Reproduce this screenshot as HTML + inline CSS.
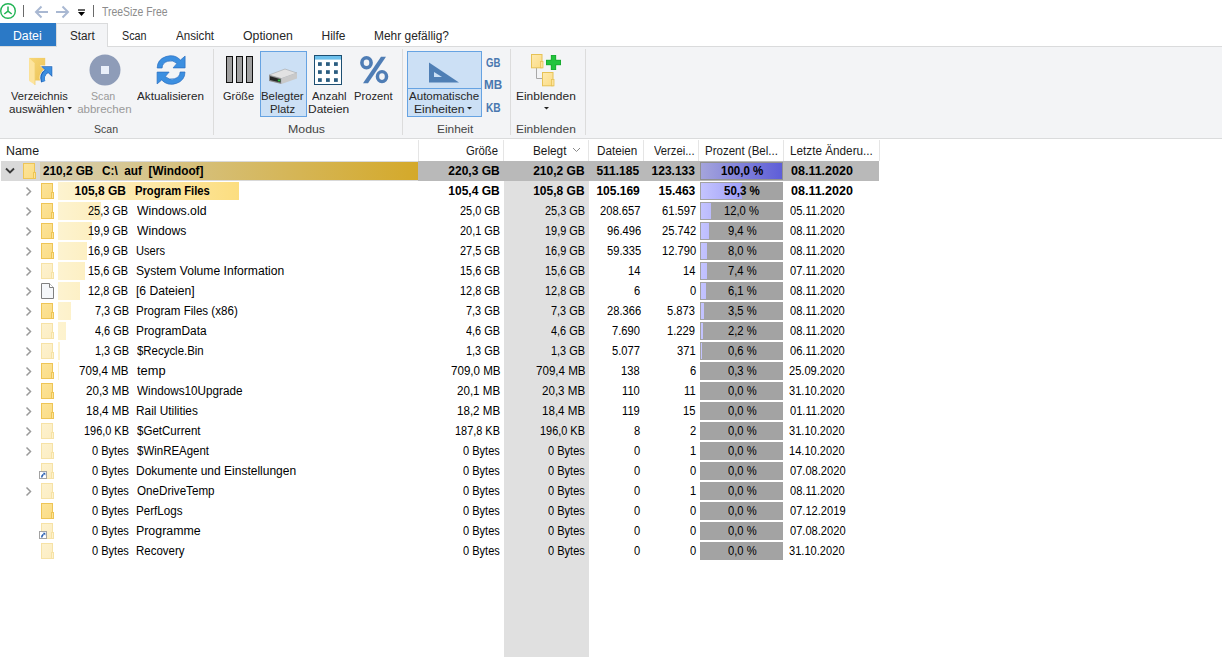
<!DOCTYPE html>
<html><head><meta charset="utf-8">
<style>
html,body{margin:0;padding:0;width:1222px;height:657px;overflow:hidden;background:#fff;font-family:"Liberation Sans",sans-serif;}
.t{position:absolute;white-space:pre;line-height:16px;transform-origin:0 0;}
.a{position:absolute;}
</style></head><body>
<!-- title bar -->
<svg class="a" style="left:0;top:0" width="100" height="23">
  <circle cx="8" cy="11" r="7.3" fill="none" stroke="#22b455" stroke-width="1.4"/>
  <path d="M8 6.5 V11.2 M8 11.2 L4.3 14 M8 11.2 L11.7 14" stroke="#22b455" stroke-width="1.5" fill="none"/>
  <path d="M23.5 5 V17" stroke="#6a6a6a" stroke-width="1"/>
  <path d="M36 12 H48 M41.5 6.5 L36 12 L41.5 17.5" stroke="#a9b8d2" stroke-width="2" fill="none"/>
  <path d="M56 12 H68 M62.5 6.5 L68 12 L62.5 17.5" stroke="#a9b8d2" stroke-width="2" fill="none"/>
  <path d="M78 10 H85" stroke="#000" stroke-width="1.2"/>
  <path d="M78 12 H85 L81.5 16 Z" fill="#000"/>
  <path d="M93.5 5 V17" stroke="#6a6a6a" stroke-width="1"/>
</svg>
<!-- tabs -->
<div class="a" style="left:0;top:23px;width:56px;height:23px;background:#2b79c6"></div>
<div class="a" style="left:56px;top:23px;width:50px;height:24px;background:#f3f4f6;border:1px solid #dadbdc;border-bottom:none;box-sizing:content-box"></div>
<!-- ribbon -->
<div class="a" style="left:0;top:46px;width:1222px;height:92px;background:#f3f4f6;border-top:1px solid #dadbdc;border-bottom:1px solid #dadbdc;box-sizing:border-box;height:93px"></div>
<div class="a" style="left:57px;top:46px;width:50px;height:2px;background:#f3f4f6"></div>
<!-- group separators -->
<div class="a" style="left:213px;top:49px;width:1px;height:86px;background:#dcdcdc"></div>
<div class="a" style="left:402px;top:49px;width:1px;height:86px;background:#dcdcdc"></div>
<div class="a" style="left:510px;top:49px;width:1px;height:86px;background:#dcdcdc"></div>
<div class="a" style="left:585px;top:49px;width:1px;height:86px;background:#dcdcdc"></div>
<!-- selected buttons -->
<div class="a" style="left:260px;top:51px;width:47px;height:66px;background:#cce0f5;border:1px solid #66a3e2;box-sizing:border-box"></div>
<div class="a" style="left:407px;top:51px;width:75px;height:66px;background:#cce0f5;border:1px solid #66a3e2;box-sizing:border-box"></div>
<div class="a" style="left:408px;top:88px;width:73px;height:1px;background:#66a3e2"></div>
<!-- ribbon icons -->
<svg class="a" style="left:0;top:0" width="600" height="138">
  <!-- Verzeichnis: folder + arrow -->
    <defs><linearGradient id="vb" x1="0" y1="0" x2="1" y2="1"><stop offset="0" stop-color="#f7d676"/><stop offset="1" stop-color="#ecc357"/></linearGradient></defs>
    <rect x="29.2" y="57.9" width="16" height="22.6" fill="url(#vb)"/>
    <path d="M29.2 57.9 L35 63.5 L35 85 L29.2 81 Z" fill="#fde49e"/>
    <path d="M35 63.5 L35 85" stroke="#f0cf72" stroke-width="0.8"/>
    <path d="M47 71 C43 73.5 41.5 77 43.2 81.8" stroke="#fff" stroke-width="5.8" fill="none"/>
    <path d="M40 65.5 H53.2 V78 Z" fill="#fff"/>
    <path d="M47 71 C43 73.5 41.5 77 43.2 81.8" stroke="#2566b8" stroke-width="4.6" fill="none"/>
    <path d="M41 66.3 H52.3 V77 Z" fill="#2566b8"/>
    <path d="M47 71 C43.4 73.6 42.2 77 43.6 81.2" stroke="#3d8fe0" stroke-width="3.2" fill="none"/>
    <path d="M42.6 67 H51.6 V75.4 Z" fill="#3d8fe0"/>
    <!-- stop -->
    <circle cx="105" cy="70" r="15.5" fill="#8e9cb8"/>
    <rect x="101" y="66" width="8" height="8" fill="#e9eff9"/>
    <!-- refresh -->
    <g fill="#3c8fe0" stroke="#2a6fc2" stroke-width="0.7">
    <path d="M157.2 68 A13.3 12.2 0 0 1 180.5 60 L185.1 56.1 L185.1 67.9 L173.1 67.9 L176.9 63.4 A8.4 7.2 0 0 0 162.1 68 Z"/>
    <path d="M185 72 A13.3 12.2 0 0 1 161.7 80 L157.1 83.9 L157.1 72.1 L169.1 72.1 L165.3 76.6 A8.4 7.2 0 0 0 180.1 72 Z"/>
    </g>
    <!-- groesse bars -->
    <rect x="226.5" y="56.5" width="6" height="26" fill="#a0a0a0" stroke="#111"/>
    <rect x="236.5" y="56.5" width="6" height="26" fill="#a0a0a0" stroke="#111"/>
    <rect x="246.5" y="56.5" width="6" height="26" fill="#a0a0a0" stroke="#111"/>
    <!-- drive -->
    <path d="M269 75 L285 69 L297 73 L281.5 78.5 Z" fill="#e2e2e2" stroke="#9a9a9a" stroke-width="0.5"/>
    <path d="M269 75 L281.5 78.5 L281.5 84 L269 81 Z" fill="#8a8a8a"/>
    <path d="M270 76.3 L280.5 79.3 L280.5 82.6 L270 80 Z" fill="#262626"/>
    <path d="M281.5 78.5 L297 73 L297 78.5 L281.5 84 Z" fill="#c9c9c9"/>
    <rect x="277.8" y="79.6" width="2.4" height="1.8" fill="#2cc040"/>
    <!-- calendar -->
    <rect x="314.5" y="55.5" width="27" height="29" fill="#fff" stroke="#1d4f72"/>
    <rect x="315" y="56" width="26" height="3.6" fill="#6cc0ec"/>
    <g fill="#2b5d80">
      <rect x="318" y="62.2" width="3.8" height="3.7"/><rect x="326" y="62.2" width="3.8" height="3.7"/><rect x="334" y="62.2" width="3.8" height="3.7"/>
      <rect x="318" y="70.2" width="3.8" height="3.7"/><rect x="326" y="70.2" width="3.8" height="3.7"/><rect x="334" y="70.2" width="3.8" height="3.7"/>
      <rect x="318" y="78.2" width="3.8" height="3.7"/><rect x="326" y="78.2" width="3.8" height="3.7"/><rect x="334" y="78.2" width="3.8" height="3.7"/>
    </g>
    <!-- percent -->
    <g fill="#4f7db5" fill-rule="evenodd">
      <path d="M360.1 62.8 A6.4 6.7 0 1 0 372.9 62.8 A6.4 6.7 0 1 0 360.1 62.8 Z M363.7 62.8 A2.8 3.3 0 1 0 369.3 62.8 A2.8 3.3 0 1 0 363.7 62.8 Z"/>
      <path d="M375.7 76.6 A6.3 6.6 0 1 0 388.3 76.6 A6.3 6.6 0 1 0 375.7 76.6 Z M379.2 76.6 A2.8 3.3 0 1 0 384.8 76.6 A2.8 3.3 0 1 0 379.2 76.6 Z"/>
      <path d="M363 83.2 L368 83.2 L386 56.8 L381 56.8 Z"/>
    </g>
    <!-- set square -->
    <path d="M429 62.5 L459 82.5 L429 82.5 Z" fill="#4f7fb5"/>
    <path d="M434 72 L442 77 L434 77 Z" fill="#cce0f5"/>
    <!-- einblenden -->
    <defs><linearGradient id="eb" x1="0" y1="0" x2="1" y2="1"><stop offset="0" stop-color="#feeab0"/><stop offset="1" stop-color="#fbdc84"/></linearGradient></defs>
    <path d="M536.5 68 V78.5 H542" stroke="#a8a8a8" fill="none"/>
    <rect x="531.5" y="54.5" width="10.5" height="13.3" fill="url(#eb)" stroke="#e6c256"/>
    <rect x="540.5" y="61.5" width="2.5" height="6.3" fill="#fde39a" stroke="#e6c256" stroke-width="0.8"/>
    <rect x="542.5" y="72.5" width="10.5" height="13.3" fill="url(#eb)" stroke="#e6c256"/>
    <rect x="551.5" y="79.5" width="2.5" height="6.3" fill="#fde39a" stroke="#e6c256" stroke-width="0.8"/>
    <path d="M546 62.5 H561 M553.5 55 V70" stroke="#fff" stroke-width="7"/>
    <path d="M546 62.5 H561 M553.5 55 V70" stroke="#15a02c" stroke-width="5.4"/>
    <path d="M546.6 62.5 H560.4 M553.5 55.6 V69.4" stroke="#22c43c" stroke-width="4"/>
    <!-- dropdown arrows -->
    <path d="M67.5 107 H72 L69.75 109.5 Z" fill="#222"/>
    <path d="M467 107 H472 L469.5 109.5 Z" fill="#222"/>
    <path d="M544 107 H549 L546.5 109.5 Z" fill="#222"/>
  
</svg>
<!-- list header -->
<div class="a" style="left:418px;top:140px;width:1px;height:21px;background:#e5e5e5"></div>
<div class="a" style="left:503px;top:140px;width:1px;height:21px;background:#e5e5e5"></div>
<div class="a" style="left:588px;top:140px;width:1px;height:21px;background:#e5e5e5"></div>
<div class="a" style="left:643px;top:140px;width:1px;height:21px;background:#e5e5e5"></div>
<div class="a" style="left:698px;top:140px;width:1px;height:21px;background:#e5e5e5"></div>
<div class="a" style="left:783px;top:140px;width:1px;height:21px;background:#e5e5e5"></div>
<div class="a" style="left:879px;top:140px;width:1px;height:21px;background:#e5e5e5"></div>
<svg class="a" style="left:570px;top:146px" width="12" height="8"><path d="M3 2 L6.5 5.5 L10 2" stroke="#8a8a8a" stroke-width="1" fill="none"/></svg>
<!-- sorted column bg -->
<div class="a" style="left:504px;top:181px;width:85px;height:476px;background:#e0e0e0"></div>
<div style="position:absolute;left:1px;top:161px;width:417px;height:20px;background:#d9d9d9"></div>
<div style="position:absolute;left:418px;top:161px;width:461px;height:20px;background:#b9b9b9"></div>
<div style="position:absolute;left:40px;top:162px;width:378px;height:18px;background:linear-gradient(90deg,#d7cfb1,#d4a92a)"></div>
<div style="position:absolute;left:700px;top:162px;width:83px;height:18px;background:#909090"></div>
<div style="position:absolute;left:701px;top:163px;width:81px;height:16px;background:linear-gradient(90deg,#a4a4dc,#5e5ed8)"></div>
<svg style="position:absolute;left:4px;top:166px" width="12" height="10"><path d="M2 2.5 L6 6.5 L10 2.5" fill="none" stroke="#383838" stroke-width="1.8"/></svg>
<svg style="position:absolute;left:23px;top:163px" width="14" height="17"><defs><linearGradient id="fg0" x1="0" y1="0" x2="1" y2="1"><stop offset="0" stop-color="#fce49a"/><stop offset="1" stop-color="#fbdc84"/></linearGradient></defs><rect x="0.5" y="0.5" width="11" height="15" fill="url(#fg0)" stroke="#eec556"/><rect x="10.5" y="9.5" width="2" height="6" fill="#fce49a" stroke="#eec556"/></svg>
<div style="position:absolute;left:58px;top:182px;width:181px;height:18px;background:linear-gradient(90deg,#fdf3d0,#fbc830);background-size:360px 18px"></div>
<div style="position:absolute;left:700px;top:182px;width:83px;height:18px;background:#a3a3a3"></div>
<div style="position:absolute;left:701px;top:183px;width:41px;height:16px;background:linear-gradient(90deg,#c4c4ff,#7c7cf0);background-size:81px 16px"></div>
<svg style="position:absolute;left:24px;top:186px" width="10" height="12"><path d="M2.5 1.5 L6.5 5.5 L2.5 9.5" fill="none" stroke="#9a9a9a" stroke-width="1.5"/></svg>
<svg style="position:absolute;left:41px;top:183px" width="14" height="17"><defs><linearGradient id="fg1" x1="0" y1="0" x2="1" y2="1"><stop offset="0" stop-color="#fce49a"/><stop offset="1" stop-color="#fbdc84"/></linearGradient></defs><rect x="0.5" y="0.5" width="11" height="15" fill="url(#fg1)" stroke="#eec556"/><rect x="10.5" y="9.5" width="2" height="6" fill="#fce49a" stroke="#eec556"/></svg>
<div style="position:absolute;left:58px;top:202px;width:43px;height:18px;background:linear-gradient(90deg,#fdf3d0,#fbc830);background-size:360px 18px"></div>
<div style="position:absolute;left:700px;top:202px;width:83px;height:18px;background:#a3a3a3"></div>
<div style="position:absolute;left:701px;top:203px;width:10px;height:16px;background:linear-gradient(90deg,#c4c4ff,#7c7cf0);background-size:81px 16px"></div>
<svg style="position:absolute;left:24px;top:206px" width="10" height="12"><path d="M2.5 1.5 L6.5 5.5 L2.5 9.5" fill="none" stroke="#9a9a9a" stroke-width="1.5"/></svg>
<svg style="position:absolute;left:41px;top:203px" width="14" height="17"><defs><linearGradient id="fg2" x1="0" y1="0" x2="1" y2="1"><stop offset="0" stop-color="#fce49a"/><stop offset="1" stop-color="#fbdc84"/></linearGradient></defs><rect x="0.5" y="0.5" width="11" height="15" fill="url(#fg2)" stroke="#eec556"/><rect x="10.5" y="9.5" width="2" height="6" fill="#fce49a" stroke="#eec556"/></svg>
<div style="position:absolute;left:58px;top:222px;width:34px;height:18px;background:linear-gradient(90deg,#fdf3d0,#fbc830);background-size:360px 18px"></div>
<div style="position:absolute;left:700px;top:222px;width:83px;height:18px;background:#a3a3a3"></div>
<div style="position:absolute;left:701px;top:223px;width:8px;height:16px;background:linear-gradient(90deg,#c4c4ff,#7c7cf0);background-size:81px 16px"></div>
<svg style="position:absolute;left:24px;top:226px" width="10" height="12"><path d="M2.5 1.5 L6.5 5.5 L2.5 9.5" fill="none" stroke="#9a9a9a" stroke-width="1.5"/></svg>
<svg style="position:absolute;left:41px;top:223px" width="14" height="17"><defs><linearGradient id="fg3" x1="0" y1="0" x2="1" y2="1"><stop offset="0" stop-color="#fce49a"/><stop offset="1" stop-color="#fbdc84"/></linearGradient></defs><rect x="0.5" y="0.5" width="11" height="15" fill="url(#fg3)" stroke="#eec556"/><rect x="10.5" y="9.5" width="2" height="6" fill="#fce49a" stroke="#eec556"/></svg>
<div style="position:absolute;left:58px;top:242px;width:29px;height:18px;background:linear-gradient(90deg,#fdf3d0,#fbc830);background-size:360px 18px"></div>
<div style="position:absolute;left:700px;top:242px;width:83px;height:18px;background:#a3a3a3"></div>
<div style="position:absolute;left:701px;top:243px;width:6px;height:16px;background:linear-gradient(90deg,#c4c4ff,#7c7cf0);background-size:81px 16px"></div>
<svg style="position:absolute;left:24px;top:246px" width="10" height="12"><path d="M2.5 1.5 L6.5 5.5 L2.5 9.5" fill="none" stroke="#9a9a9a" stroke-width="1.5"/></svg>
<svg style="position:absolute;left:41px;top:243px" width="14" height="17"><defs><linearGradient id="fg4" x1="0" y1="0" x2="1" y2="1"><stop offset="0" stop-color="#fce49a"/><stop offset="1" stop-color="#fbdc84"/></linearGradient></defs><rect x="0.5" y="0.5" width="11" height="15" fill="url(#fg4)" stroke="#eec556"/><rect x="10.5" y="9.5" width="2" height="6" fill="#fce49a" stroke="#eec556"/></svg>
<div style="position:absolute;left:58px;top:262px;width:27px;height:18px;background:linear-gradient(90deg,#fdf3d0,#fbc830);background-size:360px 18px"></div>
<div style="position:absolute;left:700px;top:262px;width:83px;height:18px;background:#a3a3a3"></div>
<div style="position:absolute;left:701px;top:263px;width:6px;height:16px;background:linear-gradient(90deg,#c4c4ff,#7c7cf0);background-size:81px 16px"></div>
<svg style="position:absolute;left:24px;top:266px" width="10" height="12"><path d="M2.5 1.5 L6.5 5.5 L2.5 9.5" fill="none" stroke="#9a9a9a" stroke-width="1.5"/></svg>
<svg style="position:absolute;left:41px;top:263px" width="14" height="17"><defs><linearGradient id="fg5" x1="0" y1="0" x2="1" y2="1"><stop offset="0" stop-color="#fdf2cf"/><stop offset="1" stop-color="#fcedc2"/></linearGradient></defs><rect x="0.5" y="0.5" width="11" height="15" fill="url(#fg5)" stroke="#f6e2a6"/><rect x="10.5" y="9.5" width="2" height="6" fill="#fdf2cf" stroke="#f6e2a6"/></svg>
<div style="position:absolute;left:58px;top:282px;width:22px;height:18px;background:linear-gradient(90deg,#fdf3d0,#fbc830);background-size:360px 18px"></div>
<div style="position:absolute;left:700px;top:282px;width:83px;height:18px;background:#a3a3a3"></div>
<div style="position:absolute;left:701px;top:283px;width:5px;height:16px;background:linear-gradient(90deg,#c4c4ff,#7c7cf0);background-size:81px 16px"></div>
<svg style="position:absolute;left:24px;top:286px" width="10" height="12"><path d="M2.5 1.5 L6.5 5.5 L2.5 9.5" fill="none" stroke="#9a9a9a" stroke-width="1.5"/></svg>
<svg style="position:absolute;left:41px;top:283px" width="13" height="16"><path d="M0.5 0.5 H8.5 L12.5 4.5 V15.5 H0.5 Z" fill="#f5f7fa" stroke="#808080"/><path d="M8.5 0.5 V4.5 H12.5" fill="#fff" stroke="#808080"/></svg>
<div style="position:absolute;left:58px;top:302px;width:13px;height:18px;background:linear-gradient(90deg,#fdf3d0,#fbc830);background-size:360px 18px"></div>
<div style="position:absolute;left:700px;top:302px;width:83px;height:18px;background:#a3a3a3"></div>
<div style="position:absolute;left:701px;top:303px;width:3px;height:16px;background:linear-gradient(90deg,#c4c4ff,#7c7cf0);background-size:81px 16px"></div>
<svg style="position:absolute;left:24px;top:306px" width="10" height="12"><path d="M2.5 1.5 L6.5 5.5 L2.5 9.5" fill="none" stroke="#9a9a9a" stroke-width="1.5"/></svg>
<svg style="position:absolute;left:41px;top:303px" width="14" height="17"><defs><linearGradient id="fg7" x1="0" y1="0" x2="1" y2="1"><stop offset="0" stop-color="#fce49a"/><stop offset="1" stop-color="#fbdc84"/></linearGradient></defs><rect x="0.5" y="0.5" width="11" height="15" fill="url(#fg7)" stroke="#eec556"/><rect x="10.5" y="9.5" width="2" height="6" fill="#fce49a" stroke="#eec556"/></svg>
<div style="position:absolute;left:58px;top:322px;width:8px;height:18px;background:linear-gradient(90deg,#fdf3d0,#fbc830);background-size:360px 18px"></div>
<div style="position:absolute;left:700px;top:322px;width:83px;height:18px;background:#a3a3a3"></div>
<div style="position:absolute;left:701px;top:323px;width:2px;height:16px;background:linear-gradient(90deg,#c4c4ff,#7c7cf0);background-size:81px 16px"></div>
<svg style="position:absolute;left:24px;top:326px" width="10" height="12"><path d="M2.5 1.5 L6.5 5.5 L2.5 9.5" fill="none" stroke="#9a9a9a" stroke-width="1.5"/></svg>
<svg style="position:absolute;left:41px;top:323px" width="14" height="17"><defs><linearGradient id="fg8" x1="0" y1="0" x2="1" y2="1"><stop offset="0" stop-color="#fdf2cf"/><stop offset="1" stop-color="#fcedc2"/></linearGradient></defs><rect x="0.5" y="0.5" width="11" height="15" fill="url(#fg8)" stroke="#f6e2a6"/><rect x="10.5" y="9.5" width="2" height="6" fill="#fdf2cf" stroke="#f6e2a6"/></svg>
<div style="position:absolute;left:58px;top:342px;width:2px;height:18px;background:linear-gradient(90deg,#fdf3d0,#fbc830);background-size:360px 18px"></div>
<div style="position:absolute;left:700px;top:342px;width:83px;height:18px;background:#a3a3a3"></div>
<div style="position:absolute;left:701px;top:343px;width:1px;height:16px;background:linear-gradient(90deg,#c4c4ff,#7c7cf0);background-size:81px 16px"></div>
<svg style="position:absolute;left:24px;top:346px" width="10" height="12"><path d="M2.5 1.5 L6.5 5.5 L2.5 9.5" fill="none" stroke="#9a9a9a" stroke-width="1.5"/></svg>
<svg style="position:absolute;left:41px;top:343px" width="14" height="17"><defs><linearGradient id="fg9" x1="0" y1="0" x2="1" y2="1"><stop offset="0" stop-color="#fdf2cf"/><stop offset="1" stop-color="#fcedc2"/></linearGradient></defs><rect x="0.5" y="0.5" width="11" height="15" fill="url(#fg9)" stroke="#f6e2a6"/><rect x="10.5" y="9.5" width="2" height="6" fill="#fdf2cf" stroke="#f6e2a6"/></svg>
<div style="position:absolute;left:58px;top:362px;width:1px;height:18px;background:linear-gradient(90deg,#fdf3d0,#fbc830);background-size:360px 18px"></div>
<div style="position:absolute;left:700px;top:362px;width:83px;height:18px;background:#a3a3a3"></div>
<svg style="position:absolute;left:24px;top:366px" width="10" height="12"><path d="M2.5 1.5 L6.5 5.5 L2.5 9.5" fill="none" stroke="#9a9a9a" stroke-width="1.5"/></svg>
<svg style="position:absolute;left:41px;top:363px" width="14" height="17"><defs><linearGradient id="fg10" x1="0" y1="0" x2="1" y2="1"><stop offset="0" stop-color="#fce49a"/><stop offset="1" stop-color="#fbdc84"/></linearGradient></defs><rect x="0.5" y="0.5" width="11" height="15" fill="url(#fg10)" stroke="#eec556"/><rect x="10.5" y="9.5" width="2" height="6" fill="#fce49a" stroke="#eec556"/></svg>
<div style="position:absolute;left:700px;top:382px;width:83px;height:18px;background:#a3a3a3"></div>
<svg style="position:absolute;left:24px;top:386px" width="10" height="12"><path d="M2.5 1.5 L6.5 5.5 L2.5 9.5" fill="none" stroke="#9a9a9a" stroke-width="1.5"/></svg>
<svg style="position:absolute;left:41px;top:383px" width="14" height="17"><defs><linearGradient id="fg11" x1="0" y1="0" x2="1" y2="1"><stop offset="0" stop-color="#fce49a"/><stop offset="1" stop-color="#fbdc84"/></linearGradient></defs><rect x="0.5" y="0.5" width="11" height="15" fill="url(#fg11)" stroke="#eec556"/><rect x="10.5" y="9.5" width="2" height="6" fill="#fce49a" stroke="#eec556"/></svg>
<div style="position:absolute;left:700px;top:402px;width:83px;height:18px;background:#a3a3a3"></div>
<svg style="position:absolute;left:24px;top:406px" width="10" height="12"><path d="M2.5 1.5 L6.5 5.5 L2.5 9.5" fill="none" stroke="#9a9a9a" stroke-width="1.5"/></svg>
<svg style="position:absolute;left:41px;top:403px" width="14" height="17"><defs><linearGradient id="fg12" x1="0" y1="0" x2="1" y2="1"><stop offset="0" stop-color="#fce49a"/><stop offset="1" stop-color="#fbdc84"/></linearGradient></defs><rect x="0.5" y="0.5" width="11" height="15" fill="url(#fg12)" stroke="#eec556"/><rect x="10.5" y="9.5" width="2" height="6" fill="#fce49a" stroke="#eec556"/></svg>
<div style="position:absolute;left:700px;top:422px;width:83px;height:18px;background:#a3a3a3"></div>
<svg style="position:absolute;left:24px;top:426px" width="10" height="12"><path d="M2.5 1.5 L6.5 5.5 L2.5 9.5" fill="none" stroke="#9a9a9a" stroke-width="1.5"/></svg>
<svg style="position:absolute;left:41px;top:423px" width="14" height="17"><defs><linearGradient id="fg13" x1="0" y1="0" x2="1" y2="1"><stop offset="0" stop-color="#fdf2cf"/><stop offset="1" stop-color="#fcedc2"/></linearGradient></defs><rect x="0.5" y="0.5" width="11" height="15" fill="url(#fg13)" stroke="#f6e2a6"/><rect x="10.5" y="9.5" width="2" height="6" fill="#fdf2cf" stroke="#f6e2a6"/></svg>
<div style="position:absolute;left:700px;top:442px;width:83px;height:18px;background:#a3a3a3"></div>
<svg style="position:absolute;left:24px;top:446px" width="10" height="12"><path d="M2.5 1.5 L6.5 5.5 L2.5 9.5" fill="none" stroke="#9a9a9a" stroke-width="1.5"/></svg>
<svg style="position:absolute;left:41px;top:443px" width="14" height="17"><defs><linearGradient id="fg14" x1="0" y1="0" x2="1" y2="1"><stop offset="0" stop-color="#fdf2cf"/><stop offset="1" stop-color="#fcedc2"/></linearGradient></defs><rect x="0.5" y="0.5" width="11" height="15" fill="url(#fg14)" stroke="#f6e2a6"/><rect x="10.5" y="9.5" width="2" height="6" fill="#fdf2cf" stroke="#f6e2a6"/></svg>
<div style="position:absolute;left:700px;top:462px;width:83px;height:18px;background:#a3a3a3"></div>
<svg style="position:absolute;left:41px;top:463px" width="14" height="17"><defs><linearGradient id="fg15" x1="0" y1="0" x2="1" y2="1"><stop offset="0" stop-color="#fdf2cf"/><stop offset="1" stop-color="#fcedc2"/></linearGradient></defs><rect x="0.5" y="0.5" width="11" height="15" fill="url(#fg15)" stroke="#f6e2a6"/><rect x="10.5" y="9.5" width="2" height="6" fill="#fdf2cf" stroke="#f6e2a6"/></svg>
<svg style="position:absolute;left:39px;top:471px" width="8" height="8"><rect x="0.5" y="0.5" width="7" height="7" fill="#fff" stroke="#a3a3a3"/><path d="M3 6.5 C2.6 5 3.2 4 4.6 3.3" stroke="#2a5fb0" stroke-width="1.5" fill="none"/><path d="M3.6 1.8 H6.3 V4.5 Z" fill="#2a5fb0"/></svg>
<div style="position:absolute;left:700px;top:482px;width:83px;height:18px;background:#a3a3a3"></div>
<svg style="position:absolute;left:24px;top:486px" width="10" height="12"><path d="M2.5 1.5 L6.5 5.5 L2.5 9.5" fill="none" stroke="#9a9a9a" stroke-width="1.5"/></svg>
<svg style="position:absolute;left:41px;top:483px" width="14" height="17"><defs><linearGradient id="fg16" x1="0" y1="0" x2="1" y2="1"><stop offset="0" stop-color="#fdf2cf"/><stop offset="1" stop-color="#fcedc2"/></linearGradient></defs><rect x="0.5" y="0.5" width="11" height="15" fill="url(#fg16)" stroke="#f6e2a6"/><rect x="10.5" y="9.5" width="2" height="6" fill="#fdf2cf" stroke="#f6e2a6"/></svg>
<div style="position:absolute;left:700px;top:502px;width:83px;height:18px;background:#a3a3a3"></div>
<svg style="position:absolute;left:41px;top:503px" width="14" height="17"><defs><linearGradient id="fg17" x1="0" y1="0" x2="1" y2="1"><stop offset="0" stop-color="#fce49a"/><stop offset="1" stop-color="#fbdc84"/></linearGradient></defs><rect x="0.5" y="0.5" width="11" height="15" fill="url(#fg17)" stroke="#eec556"/><rect x="10.5" y="9.5" width="2" height="6" fill="#fce49a" stroke="#eec556"/></svg>
<div style="position:absolute;left:700px;top:522px;width:83px;height:18px;background:#a3a3a3"></div>
<svg style="position:absolute;left:41px;top:523px" width="14" height="17"><defs><linearGradient id="fg18" x1="0" y1="0" x2="1" y2="1"><stop offset="0" stop-color="#fdf2cf"/><stop offset="1" stop-color="#fcedc2"/></linearGradient></defs><rect x="0.5" y="0.5" width="11" height="15" fill="url(#fg18)" stroke="#f6e2a6"/><rect x="10.5" y="9.5" width="2" height="6" fill="#fdf2cf" stroke="#f6e2a6"/></svg>
<svg style="position:absolute;left:39px;top:531px" width="8" height="8"><rect x="0.5" y="0.5" width="7" height="7" fill="#fff" stroke="#a3a3a3"/><path d="M3 6.5 C2.6 5 3.2 4 4.6 3.3" stroke="#2a5fb0" stroke-width="1.5" fill="none"/><path d="M3.6 1.8 H6.3 V4.5 Z" fill="#2a5fb0"/></svg>
<div style="position:absolute;left:700px;top:542px;width:83px;height:18px;background:#a3a3a3"></div>
<svg style="position:absolute;left:41px;top:543px" width="14" height="17"><defs><linearGradient id="fg19" x1="0" y1="0" x2="1" y2="1"><stop offset="0" stop-color="#fdf2cf"/><stop offset="1" stop-color="#fcedc2"/></linearGradient></defs><rect x="0.5" y="0.5" width="11" height="15" fill="url(#fg19)" stroke="#f6e2a6"/><rect x="10.5" y="9.5" width="2" height="6" fill="#fdf2cf" stroke="#f6e2a6"/></svg>
<div class="t" style="left:101.80px;top:4px;font-size:12px;color:#8c8c8c;transform:scaleX(0.868)">TreeSize Free</div>
<div class="t" style="left:13.48px;top:28px;font-size:12px;color:#fff;transform:scaleX(1.023)">Datei</div>
<div class="t" style="left:69.53px;top:28px;font-size:12px;color:#262626;transform:scaleX(0.975)">Start</div>
<div class="t" style="left:122.40px;top:28px;font-size:12px;color:#262626;transform:scaleX(0.896)">Scan</div>
<div class="t" style="left:176.00px;top:28px;font-size:12px;color:#262626;transform:scaleX(0.967)">Ansicht</div>
<div class="t" style="left:243.30px;top:28px;font-size:12px;color:#262626;transform:scaleX(1.023)">Optionen</div>
<div class="t" style="left:321.50px;top:28px;font-size:12px;color:#262626">Hilfe</div>
<div class="t" style="left:374.31px;top:28px;font-size:12px;color:#262626;transform:scaleX(0.995)">Mehr gefällig?</div>
<div class="t" style="left:11.30px;top:88px;font-size:11.5px;color:#262626;transform:scaleX(0.964)">Verzeichnis</div>
<div class="t" style="left:8.70px;top:101px;font-size:11.5px;color:#262626;transform:scaleX(1.011)">auswählen</div>
<div class="t" style="left:91.48px;top:88px;font-size:11.5px;color:#9a9a9a;transform:scaleX(0.924)">Scan</div>
<div class="t" style="left:77.20px;top:101px;font-size:11.5px;color:#9a9a9a">abbrechen</div>
<div class="t" style="left:137.20px;top:88px;font-size:11.5px;color:#262626;transform:scaleX(1.018)">Aktualisieren</div>
<div class="t" style="left:222.74px;top:88px;font-size:11.5px;color:#262626;transform:scaleX(0.958)">Größe</div>
<div class="t" style="left:261.31px;top:88px;font-size:11.5px;color:#262626;transform:scaleX(0.993)">Belegter</div>
<div class="t" style="left:270.42px;top:101px;font-size:11.5px;color:#262626;transform:scaleX(0.983)">Platz</div>
<div class="t" style="left:311.60px;top:88px;font-size:11.5px;color:#262626;transform:scaleX(0.983)">Anzahl</div>
<div class="t" style="left:308.36px;top:101px;font-size:11.5px;color:#262626;transform:scaleX(1.039)">Dateien</div>
<div class="t" style="left:353.63px;top:88px;font-size:11.5px;color:#262626;transform:scaleX(0.972)">Prozent</div>
<div class="t" style="left:409.40px;top:88px;font-size:11.5px;color:#262626;transform:scaleX(1.006)">Automatische</div>
<div class="t" style="left:414.15px;top:101px;font-size:11.5px;color:#262626;transform:scaleX(1.052)">Einheiten</div>
<div class="t" style="left:516.26px;top:88px;font-size:11.5px;color:#262626;transform:scaleX(1.039)">Einblenden</div>
<div class="t" style="left:93.58px;top:121px;font-size:11.5px;color:#444;transform:scaleX(0.916)">Scan</div>
<div class="t" style="left:287.93px;top:121px;font-size:11.5px;color:#444;transform:scaleX(1.073)">Modus</div>
<div class="t" style="left:436.87px;top:121px;font-size:11.5px;color:#444;transform:scaleX(1.032)">Einheit</div>
<div class="t" style="left:516.26px;top:121px;font-size:11.5px;color:#444;transform:scaleX(1.039)">Einblenden</div>
<div class="t" style="left:485.60px;top:55px;font-size:12px;color:#4a78b0;font-weight:700;transform:scaleX(0.800)">GB</div>
<div class="t" style="left:483.62px;top:77px;font-size:12px;color:#4a78b0;font-weight:700;transform:scaleX(0.976)">MB</div>
<div class="t" style="left:485.55px;top:100px;font-size:12px;color:#4a78b0;font-weight:700;transform:scaleX(0.850)">KB</div>
<div class="t" style="left:6.27px;top:143px;font-size:12px;color:#1a1a1a;transform:scaleX(1.032)">Name</div>
<div class="t" style="left:465.86px;top:143px;font-size:12px;color:#1a1a1a;transform:scaleX(0.942)">Größe</div>
<div class="t" style="left:533.42px;top:143px;font-size:12px;color:#1a1a1a;transform:scaleX(0.982)">Belegt</div>
<div class="t" style="left:597.32px;top:143px;font-size:12px;color:#1a1a1a;transform:scaleX(0.975)">Dateien</div>
<div class="t" style="left:653.60px;top:143px;font-size:12px;color:#1a1a1a;transform:scaleX(0.936)">Verzei...</div>
<div class="t" style="left:704.64px;top:143px;font-size:12px;color:#1a1a1a;transform:scaleX(0.959)">Prozent (Bel...</div>
<div class="t" style="left:789.52px;top:143px;font-size:12px;color:#1a1a1a;transform:scaleX(0.978)">Letzte Änderu...</div>
<div class="t" style="left:43.00px;top:163px;font-size:12px;color:#000;font-weight:700;transform:scaleX(0.980)">210,2 GB</div>
<div class="t" style="left:102.30px;top:163px;font-size:12px;color:#000;font-weight:700;transform:scaleX(0.983)">C:\  auf  [Windoof]</div>
<div class="t" style="left:448.30px;top:163px;font-size:12px;color:#000;font-weight:700">220,3 GB</div>
<div class="t" style="left:533.20px;top:163px;font-size:12px;color:#000;font-weight:700">210,2 GB</div>
<div class="t" style="left:596.40px;top:163px;font-size:12px;color:#000;font-weight:700">511.185</div>
<div class="t" style="left:651.60px;top:163px;font-size:12px;color:#000;font-weight:700">123.133</div>
<div class="t" style="left:720.60px;top:163px;font-size:12px;color:#000;font-weight:700;transform:scaleX(0.960)">100,0 %</div>
<div class="t" style="left:790.50px;top:163px;font-size:12px;color:#000;font-weight:700;transform:scaleX(1.042)">08.11.2020</div>
<div class="t" style="left:74.60px;top:183px;font-size:12px;color:#000;font-weight:700">105,8 GB</div>
<div class="t" style="left:134.86px;top:183px;font-size:12px;color:#000;font-weight:700;transform:scaleX(0.935)">Program Files</div>
<div class="t" style="left:448.30px;top:183px;font-size:12px;color:#000;font-weight:700">105,4 GB</div>
<div class="t" style="left:533.20px;top:183px;font-size:12px;color:#000;font-weight:700">105,8 GB</div>
<div class="t" style="left:596.40px;top:183px;font-size:12px;color:#000;font-weight:700">105.169</div>
<div class="t" style="left:658.60px;top:183px;font-size:12px;color:#000;font-weight:700">15.463</div>
<div class="t" style="left:723.96px;top:183px;font-size:12px;color:#000;font-weight:700;transform:scaleX(0.960)">50,3 %</div>
<div class="t" style="left:790.50px;top:183px;font-size:12px;color:#000;font-weight:700;transform:scaleX(1.042)">08.11.2020</div>
<div class="t" style="left:88.46px;top:203px;font-size:12px;color:#000;transform:scaleX(0.910)">25,3 GB</div>
<div class="t" style="left:137.00px;top:203px;font-size:12px;color:#000;transform:scaleX(1.021)">Windows.old</div>
<div class="t" style="left:459.86px;top:203px;font-size:12px;color:#000;transform:scaleX(0.910)">25,0 GB</div>
<div class="t" style="left:544.76px;top:203px;font-size:12px;color:#000;transform:scaleX(0.910)">25,3 GB</div>
<div class="t" style="left:600.01px;top:203px;font-size:12px;color:#000;transform:scaleX(0.930)">208.657</div>
<div class="t" style="left:661.72px;top:203px;font-size:12px;color:#000;transform:scaleX(0.930)">61.597</div>
<div class="t" style="left:724.47px;top:203px;font-size:12px;color:#000;transform:scaleX(0.933)">12,0 %</div>
<div class="t" style="left:789.70px;top:203px;font-size:12px;color:#000;transform:scaleX(0.925)">05.11.2020</div>
<div class="t" style="left:88.46px;top:223px;font-size:12px;color:#000;transform:scaleX(0.910)">19,9 GB</div>
<div class="t" style="left:137.00px;top:223px;font-size:12px;color:#000;transform:scaleX(1.015)">Windows</div>
<div class="t" style="left:459.86px;top:223px;font-size:12px;color:#000;transform:scaleX(0.910)">20,1 GB</div>
<div class="t" style="left:544.76px;top:223px;font-size:12px;color:#000;transform:scaleX(0.910)">19,9 GB</div>
<div class="t" style="left:606.52px;top:223px;font-size:12px;color:#000;transform:scaleX(0.930)">96.496</div>
<div class="t" style="left:661.72px;top:223px;font-size:12px;color:#000;transform:scaleX(0.930)">25.742</div>
<div class="t" style="left:727.74px;top:223px;font-size:12px;color:#000;transform:scaleX(0.933)">9,4 %</div>
<div class="t" style="left:789.70px;top:223px;font-size:12px;color:#000;transform:scaleX(0.925)">08.11.2020</div>
<div class="t" style="left:88.46px;top:243px;font-size:12px;color:#000;transform:scaleX(0.910)">16,9 GB</div>
<div class="t" style="left:136.07px;top:243px;font-size:12px;color:#000;transform:scaleX(0.927)">Users</div>
<div class="t" style="left:459.86px;top:243px;font-size:12px;color:#000;transform:scaleX(0.910)">27,5 GB</div>
<div class="t" style="left:544.76px;top:243px;font-size:12px;color:#000;transform:scaleX(0.910)">16,9 GB</div>
<div class="t" style="left:606.52px;top:243px;font-size:12px;color:#000;transform:scaleX(0.930)">59.335</div>
<div class="t" style="left:661.72px;top:243px;font-size:12px;color:#000;transform:scaleX(0.930)">12.790</div>
<div class="t" style="left:728.21px;top:243px;font-size:12px;color:#000;transform:scaleX(0.933)">8,0 %</div>
<div class="t" style="left:789.70px;top:243px;font-size:12px;color:#000;transform:scaleX(0.925)">08.11.2020</div>
<div class="t" style="left:88.46px;top:263px;font-size:12px;color:#000;transform:scaleX(0.910)">15,6 GB</div>
<div class="t" style="left:135.99px;top:263px;font-size:12px;color:#000;transform:scaleX(1.010)">System Volume Information</div>
<div class="t" style="left:459.86px;top:263px;font-size:12px;color:#000;transform:scaleX(0.910)">15,6 GB</div>
<div class="t" style="left:544.76px;top:263px;font-size:12px;color:#000;transform:scaleX(0.910)">15,6 GB</div>
<div class="t" style="left:627.91px;top:263px;font-size:12px;color:#000;transform:scaleX(0.930)">14</div>
<div class="t" style="left:683.11px;top:263px;font-size:12px;color:#000;transform:scaleX(0.930)">14</div>
<div class="t" style="left:727.74px;top:263px;font-size:12px;color:#000;transform:scaleX(0.933)">7,4 %</div>
<div class="t" style="left:789.70px;top:263px;font-size:12px;color:#000;transform:scaleX(0.925)">07.11.2020</div>
<div class="t" style="left:88.46px;top:283px;font-size:12px;color:#000;transform:scaleX(0.910)">12,8 GB</div>
<div class="t" style="left:135.99px;top:283px;font-size:12px;color:#000;transform:scaleX(1.011)">[6 Dateien]</div>
<div class="t" style="left:459.86px;top:283px;font-size:12px;color:#000;transform:scaleX(0.910)">12,8 GB</div>
<div class="t" style="left:544.76px;top:283px;font-size:12px;color:#000;transform:scaleX(0.910)">12,8 GB</div>
<div class="t" style="left:634.42px;top:283px;font-size:12px;color:#000;transform:scaleX(0.930)">6</div>
<div class="t" style="left:689.62px;top:283px;font-size:12px;color:#000;transform:scaleX(0.930)">0</div>
<div class="t" style="left:727.74px;top:283px;font-size:12px;color:#000;transform:scaleX(0.933)">6,1 %</div>
<div class="t" style="left:789.70px;top:283px;font-size:12px;color:#000;transform:scaleX(0.925)">08.11.2020</div>
<div class="t" style="left:94.83px;top:303px;font-size:12px;color:#000;transform:scaleX(0.910)">7,3 GB</div>
<div class="t" style="left:136.03px;top:303px;font-size:12px;color:#000;transform:scaleX(0.966)">Program Files (x86)</div>
<div class="t" style="left:466.23px;top:303px;font-size:12px;color:#000;transform:scaleX(0.910)">7,3 GB</div>
<div class="t" style="left:551.13px;top:303px;font-size:12px;color:#000;transform:scaleX(0.910)">7,3 GB</div>
<div class="t" style="left:606.52px;top:303px;font-size:12px;color:#000;transform:scaleX(0.930)">28.366</div>
<div class="t" style="left:667.30px;top:303px;font-size:12px;color:#000;transform:scaleX(0.930)">5.873</div>
<div class="t" style="left:727.74px;top:303px;font-size:12px;color:#000;transform:scaleX(0.933)">3,5 %</div>
<div class="t" style="left:789.70px;top:303px;font-size:12px;color:#000;transform:scaleX(0.925)">08.11.2020</div>
<div class="t" style="left:94.83px;top:323px;font-size:12px;color:#000;transform:scaleX(0.910)">4,6 GB</div>
<div class="t" style="left:136.01px;top:323px;font-size:12px;color:#000;transform:scaleX(0.989)">ProgramData</div>
<div class="t" style="left:466.23px;top:323px;font-size:12px;color:#000;transform:scaleX(0.910)">4,6 GB</div>
<div class="t" style="left:551.13px;top:323px;font-size:12px;color:#000;transform:scaleX(0.910)">4,6 GB</div>
<div class="t" style="left:612.10px;top:323px;font-size:12px;color:#000;transform:scaleX(0.930)">7.690</div>
<div class="t" style="left:667.30px;top:323px;font-size:12px;color:#000;transform:scaleX(0.930)">1.229</div>
<div class="t" style="left:727.74px;top:323px;font-size:12px;color:#000;transform:scaleX(0.933)">2,2 %</div>
<div class="t" style="left:789.70px;top:323px;font-size:12px;color:#000;transform:scaleX(0.925)">08.11.2020</div>
<div class="t" style="left:94.83px;top:343px;font-size:12px;color:#000;transform:scaleX(0.910)">1,3 GB</div>
<div class="t" style="left:137.00px;top:343px;font-size:12px;color:#000;transform:scaleX(0.952)">$Recycle.Bin</div>
<div class="t" style="left:466.23px;top:343px;font-size:12px;color:#000;transform:scaleX(0.910)">1,3 GB</div>
<div class="t" style="left:551.13px;top:343px;font-size:12px;color:#000;transform:scaleX(0.910)">1,3 GB</div>
<div class="t" style="left:612.10px;top:343px;font-size:12px;color:#000;transform:scaleX(0.930)">5.077</div>
<div class="t" style="left:676.60px;top:343px;font-size:12px;color:#000;transform:scaleX(0.930)">371</div>
<div class="t" style="left:728.21px;top:343px;font-size:12px;color:#000;transform:scaleX(0.933)">0,6 %</div>
<div class="t" style="left:789.70px;top:343px;font-size:12px;color:#000;transform:scaleX(0.925)">06.11.2020</div>
<div class="t" style="left:79.28px;top:363px;font-size:12px;color:#000;transform:scaleX(0.965)">709,4 MB</div>
<div class="t" style="left:137.00px;top:363px;font-size:12px;color:#000;transform:scaleX(1.069)">temp</div>
<div class="t" style="left:450.69px;top:363px;font-size:12px;color:#000;transform:scaleX(0.965)">709,0 MB</div>
<div class="t" style="left:535.58px;top:363px;font-size:12px;color:#000;transform:scaleX(0.965)">709,4 MB</div>
<div class="t" style="left:621.40px;top:363px;font-size:12px;color:#000;transform:scaleX(0.930)">138</div>
<div class="t" style="left:689.62px;top:363px;font-size:12px;color:#000;transform:scaleX(0.930)">6</div>
<div class="t" style="left:728.21px;top:363px;font-size:12px;color:#000;transform:scaleX(0.933)">0,3 %</div>
<div class="t" style="left:788.78px;top:363px;font-size:12px;color:#000;transform:scaleX(0.925)">25.09.2020</div>
<div class="t" style="left:86.04px;top:383px;font-size:12px;color:#000;transform:scaleX(0.965)">20,3 MB</div>
<div class="t" style="left:137.00px;top:383px;font-size:12px;color:#000;transform:scaleX(0.976)">Windows10Upgrade</div>
<div class="t" style="left:457.44px;top:383px;font-size:12px;color:#000;transform:scaleX(0.965)">20,1 MB</div>
<div class="t" style="left:542.34px;top:383px;font-size:12px;color:#000;transform:scaleX(0.965)">20,3 MB</div>
<div class="t" style="left:622.33px;top:383px;font-size:12px;color:#000;transform:scaleX(0.930)">110</div>
<div class="t" style="left:684.04px;top:383px;font-size:12px;color:#000;transform:scaleX(0.930)">11</div>
<div class="t" style="left:728.21px;top:383px;font-size:12px;color:#000;transform:scaleX(0.933)">0,0 %</div>
<div class="t" style="left:788.78px;top:383px;font-size:12px;color:#000;transform:scaleX(0.925)">31.10.2020</div>
<div class="t" style="left:86.04px;top:403px;font-size:12px;color:#000;transform:scaleX(0.965)">18,4 MB</div>
<div class="t" style="left:136.01px;top:403px;font-size:12px;color:#000;transform:scaleX(0.987)">Rail Utilities</div>
<div class="t" style="left:457.44px;top:403px;font-size:12px;color:#000;transform:scaleX(0.965)">18,2 MB</div>
<div class="t" style="left:542.34px;top:403px;font-size:12px;color:#000;transform:scaleX(0.965)">18,4 MB</div>
<div class="t" style="left:622.33px;top:403px;font-size:12px;color:#000;transform:scaleX(0.930)">119</div>
<div class="t" style="left:683.11px;top:403px;font-size:12px;color:#000;transform:scaleX(0.930)">15</div>
<div class="t" style="left:728.21px;top:403px;font-size:12px;color:#000;transform:scaleX(0.933)">0,0 %</div>
<div class="t" style="left:789.70px;top:403px;font-size:12px;color:#000;transform:scaleX(0.925)">01.11.2020</div>
<div class="t" style="left:83.91px;top:423px;font-size:12px;color:#000;transform:scaleX(0.910)">196,0 KB</div>
<div class="t" style="left:137.00px;top:423px;font-size:12px;color:#000;transform:scaleX(0.962)">$GetCurrent</div>
<div class="t" style="left:455.31px;top:423px;font-size:12px;color:#000;transform:scaleX(0.910)">187,8 KB</div>
<div class="t" style="left:540.21px;top:423px;font-size:12px;color:#000;transform:scaleX(0.910)">196,0 KB</div>
<div class="t" style="left:634.42px;top:423px;font-size:12px;color:#000;transform:scaleX(0.930)">8</div>
<div class="t" style="left:689.62px;top:423px;font-size:12px;color:#000;transform:scaleX(0.930)">2</div>
<div class="t" style="left:728.21px;top:423px;font-size:12px;color:#000;transform:scaleX(0.933)">0,0 %</div>
<div class="t" style="left:788.78px;top:423px;font-size:12px;color:#000;transform:scaleX(0.925)">31.10.2020</div>
<div class="t" style="left:91.70px;top:443px;font-size:12px;color:#000;transform:scaleX(0.920)">0 Bytes</div>
<div class="t" style="left:137.00px;top:443px;font-size:12px;color:#000;transform:scaleX(0.956)">$WinREAgent</div>
<div class="t" style="left:463.10px;top:443px;font-size:12px;color:#000;transform:scaleX(0.920)">0 Bytes</div>
<div class="t" style="left:548.00px;top:443px;font-size:12px;color:#000;transform:scaleX(0.920)">0 Bytes</div>
<div class="t" style="left:634.42px;top:443px;font-size:12px;color:#000;transform:scaleX(0.930)">0</div>
<div class="t" style="left:689.62px;top:443px;font-size:12px;color:#000;transform:scaleX(0.930)">1</div>
<div class="t" style="left:728.21px;top:443px;font-size:12px;color:#000;transform:scaleX(0.933)">0,0 %</div>
<div class="t" style="left:788.78px;top:443px;font-size:12px;color:#000;transform:scaleX(0.925)">14.10.2020</div>
<div class="t" style="left:91.70px;top:463px;font-size:12px;color:#000;transform:scaleX(0.920)">0 Bytes</div>
<div class="t" style="left:136.00px;top:463px;font-size:12px;color:#000">Dokumente und Einstellungen</div>
<div class="t" style="left:463.10px;top:463px;font-size:12px;color:#000;transform:scaleX(0.920)">0 Bytes</div>
<div class="t" style="left:548.00px;top:463px;font-size:12px;color:#000;transform:scaleX(0.920)">0 Bytes</div>
<div class="t" style="left:634.42px;top:463px;font-size:12px;color:#000;transform:scaleX(0.930)">0</div>
<div class="t" style="left:689.62px;top:463px;font-size:12px;color:#000;transform:scaleX(0.930)">0</div>
<div class="t" style="left:728.21px;top:463px;font-size:12px;color:#000;transform:scaleX(0.933)">0,0 %</div>
<div class="t" style="left:789.70px;top:463px;font-size:12px;color:#000;transform:scaleX(0.925)">07.08.2020</div>
<div class="t" style="left:91.70px;top:483px;font-size:12px;color:#000;transform:scaleX(0.920)">0 Bytes</div>
<div class="t" style="left:137.00px;top:483px;font-size:12px;color:#000;transform:scaleX(0.969)">OneDriveTemp</div>
<div class="t" style="left:463.10px;top:483px;font-size:12px;color:#000;transform:scaleX(0.920)">0 Bytes</div>
<div class="t" style="left:548.00px;top:483px;font-size:12px;color:#000;transform:scaleX(0.920)">0 Bytes</div>
<div class="t" style="left:634.42px;top:483px;font-size:12px;color:#000;transform:scaleX(0.930)">0</div>
<div class="t" style="left:689.62px;top:483px;font-size:12px;color:#000;transform:scaleX(0.930)">1</div>
<div class="t" style="left:728.21px;top:483px;font-size:12px;color:#000;transform:scaleX(0.933)">0,0 %</div>
<div class="t" style="left:789.70px;top:483px;font-size:12px;color:#000;transform:scaleX(0.925)">08.11.2020</div>
<div class="t" style="left:91.70px;top:503px;font-size:12px;color:#000;transform:scaleX(0.920)">0 Bytes</div>
<div class="t" style="left:136.03px;top:503px;font-size:12px;color:#000;transform:scaleX(0.970)">PerfLogs</div>
<div class="t" style="left:463.10px;top:503px;font-size:12px;color:#000;transform:scaleX(0.920)">0 Bytes</div>
<div class="t" style="left:548.00px;top:503px;font-size:12px;color:#000;transform:scaleX(0.920)">0 Bytes</div>
<div class="t" style="left:634.42px;top:503px;font-size:12px;color:#000;transform:scaleX(0.930)">0</div>
<div class="t" style="left:689.62px;top:503px;font-size:12px;color:#000;transform:scaleX(0.930)">0</div>
<div class="t" style="left:728.21px;top:503px;font-size:12px;color:#000;transform:scaleX(0.933)">0,0 %</div>
<div class="t" style="left:789.70px;top:503px;font-size:12px;color:#000;transform:scaleX(0.925)">07.12.2019</div>
<div class="t" style="left:91.70px;top:523px;font-size:12px;color:#000;transform:scaleX(0.920)">0 Bytes</div>
<div class="t" style="left:135.97px;top:523px;font-size:12px;color:#000;transform:scaleX(1.031)">Programme</div>
<div class="t" style="left:463.10px;top:523px;font-size:12px;color:#000;transform:scaleX(0.920)">0 Bytes</div>
<div class="t" style="left:548.00px;top:523px;font-size:12px;color:#000;transform:scaleX(0.920)">0 Bytes</div>
<div class="t" style="left:634.42px;top:523px;font-size:12px;color:#000;transform:scaleX(0.930)">0</div>
<div class="t" style="left:689.62px;top:523px;font-size:12px;color:#000;transform:scaleX(0.930)">0</div>
<div class="t" style="left:728.21px;top:523px;font-size:12px;color:#000;transform:scaleX(0.933)">0,0 %</div>
<div class="t" style="left:789.70px;top:523px;font-size:12px;color:#000;transform:scaleX(0.925)">07.08.2020</div>
<div class="t" style="left:91.70px;top:543px;font-size:12px;color:#000;transform:scaleX(0.920)">0 Bytes</div>
<div class="t" style="left:136.04px;top:543px;font-size:12px;color:#000;transform:scaleX(0.956)">Recovery</div>
<div class="t" style="left:463.10px;top:543px;font-size:12px;color:#000;transform:scaleX(0.920)">0 Bytes</div>
<div class="t" style="left:548.00px;top:543px;font-size:12px;color:#000;transform:scaleX(0.920)">0 Bytes</div>
<div class="t" style="left:634.42px;top:543px;font-size:12px;color:#000;transform:scaleX(0.930)">0</div>
<div class="t" style="left:689.62px;top:543px;font-size:12px;color:#000;transform:scaleX(0.930)">0</div>
<div class="t" style="left:728.21px;top:543px;font-size:12px;color:#000;transform:scaleX(0.933)">0,0 %</div>
<div class="t" style="left:788.78px;top:543px;font-size:12px;color:#000;transform:scaleX(0.925)">31.10.2020</div>
</body></html>
